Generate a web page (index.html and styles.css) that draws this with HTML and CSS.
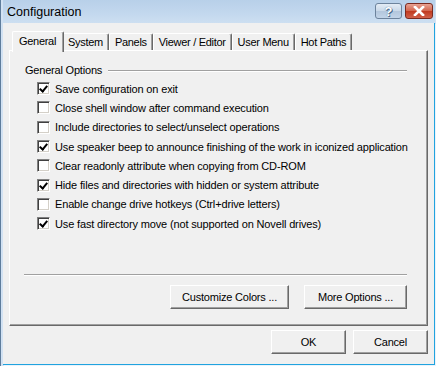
FILE: index.html
```html
<!DOCTYPE html>
<html lang="en">
<head>
  <meta charset="UTF-8">
  <title>Configuration</title>
  <link rel="stylesheet" href="styles.css">
</head>
<body>
  <div class="window">
    <div class="titlebar">
      <span class="title">Configuration</span>
      <div class="caption-btns">
        <span class="cap-btn help">?</span>
        <span class="cap-btn close">
          <svg width="14" height="10" viewBox="0 0 14 10">
            <path d="M3 1 L11 9 M11 1 L3 9" stroke="#fff" stroke-width="2.6" stroke-linecap="square"/>
          </svg>
        </span>
      </div>
    </div>
    <div class="client">
      <div class="tabs">
        <div class="tab active">General</div>
        <div class="tab">System</div>
        <div class="tab">Panels</div>
        <div class="tab">Viewer / Editor</div>
        <div class="tab">User Menu</div>
        <div class="tab">Hot Paths</div>
      </div>
      <div class="panel">
        <div class="group">
          <div class="group-head">
            <span>General Options</span>
            <div class="rule"></div>
          </div>
          <div class="options">
            <label class="opt"><span class="box checked"></span>Save configuration on exit</label>
            <label class="opt"><span class="box"></span>Close shell window after command execution</label>
            <label class="opt"><span class="box"></span>Include directories to select/unselect operations</label>
            <label class="opt"><span class="box checked"></span>Use speaker beep to announce finishing of the work in iconized application</label>
            <label class="opt"><span class="box"></span>Clear readonly attribute when copying from CD-ROM</label>
            <label class="opt"><span class="box checked"></span>Hide files and directories with hidden or system attribute</label>
            <label class="opt"><span class="box"></span>Enable change drive hotkeys (Ctrl+drive letters)</label>
            <label class="opt"><span class="box checked"></span>Use fast directory move (not supported on Novell drives)</label>
          </div>
        </div>
        <div class="panel-btns">
          <button class="btn wide">Customize Colors ...</button>
          <button class="btn more">More Options ...</button>
        </div>
      </div>
      <div class="dialog-btns">
        <button class="btn">OK</button>
        <button class="btn">Cancel</button>
      </div>
    </div>
  </div>
</body>
</html>
```

FILE: styles.css
```css
body {
  margin: 0;
  font-family: 'Liberation Sans', Arial, sans-serif;
  font-size: 11px;
  color: #000;
  background: #fff;
}
.window {
  width: 436px;
  height: 366px;
  box-sizing: border-box;
  display: flex;
  flex-direction: column;
  background: #d2e2f3;
  border-left: 1px solid #5f7d9c;
  padding: 0 1px 1px 2px;
}
.titlebar {
  height: 23px;
  flex: none;
  display: flex;
  align-items: center;
  justify-content: space-between;
  background: linear-gradient(180deg, #b8d0e9 0%, #c3d8ee 60%, #cddff1 100%);
}
.title {
  font-size: 12.5px;
  margin-left: 4px;
  padding-top: 1px;
  color: #000;
}
.caption-btns {
  display: flex;
  gap: 3px;
  margin-right: 2px;
  align-self: flex-start;
  margin-top: 3px;
}
.cap-btn {
  width: 27px;
  height: 16px;
  box-sizing: border-box;
  border: 1px solid #6d839c;
  border-radius: 3px;
  display: flex;
  align-items: center;
  justify-content: center;
}
.help {
  background: linear-gradient(180deg, #e4ecf5 0%, #c9d8e8 50%, #b3c6dc 51%, #c2d4e8 100%);
  color: #fff;
  font-weight: bold;
  font-size: 13px;
  text-shadow: 0 0 1px #3f5f82, 1px 1px 0 #4a6a8c;
}
.close {
  width: 28px;
  border-color: #7a2a20;
  background: linear-gradient(180deg, #e8a293 0%, #d2644c 50%, #c0391f 51%, #d0604a 100%);
}
.client {
  flex: 1;
  background: #f0f0f0;
  padding: 8px 6px 0 6px;
  border-right: 1px solid #20a3df;
  border-bottom: 1px solid #20a3df;
  box-shadow: 1px 1px 0 #eaf3fb;
}
.tabs {
  display: flex;
  align-items: flex-end;
  padding-left: 3px;
  height: 19px;
  position: relative;
  z-index: 1;
}
.tab {
  height: 17px;
  box-sizing: border-box;
  padding: 2px 5px 0 5px;
  border-top: 1px solid #fff;
  border-left: 1px solid #fff;
  border-right: 1px solid #696969;
  box-shadow: inset -1px 0 0 #a0a0a0;
  border-radius: 2px 2px 0 0;
  background: #f0f0f0;
  white-space: nowrap;
  letter-spacing: -0.3px;
}
.tab.active {
  height: 21px;
  margin-bottom: -2px;
  padding: 3px 7px 0 6px;
  margin-right: -2px;
  position: relative;
  z-index: 2;
}
.tab.active + .tab {
  border-left: none;
  padding-left: 6px;
}
.panel {
  height: 276px;
  box-sizing: border-box;
  border: 1px solid;
  border-color: #fff #696969 #696969 #fff;
  box-shadow: inset -1px -1px 0 #a0a0a0;
  padding: 12px 20px 0 14px;
  display: flex;
  flex-direction: column;
}
.group {
  height: 212px;
  box-sizing: border-box;
  border-bottom: 1px solid #a0a0a0;
  box-shadow: 0 1px 0 #fff;
}
.group-head {
  display: flex;
  align-items: center;
  gap: 6px;
  height: 14px;
  padding-left: 1px;
  letter-spacing: -0.2px;
}
.rule {
  flex: 1;
  border-top: 1px solid #a0a0a0;
  border-bottom: 1px solid #fff;
  margin-top: 1px;
}
.options {
  margin-top: 2px;
  padding-left: 13px;
}
.opt {
  display: flex;
  align-items: center;
  height: 19.3px;
  white-space: nowrap;
  letter-spacing: -0.15px;
}
.box {
  width: 13px;
  height: 13px;
  box-sizing: border-box;
  flex: none;
  margin-right: 5px;
  background: #fff;
  border: 1px solid;
  border-color: #808080 #fff #fff #808080;
  box-shadow: inset 1px 1px 0 #404040, inset -1px -1px 0 #d4d0c8;
  position: relative;
}
.box.checked::after {
  content: "";
  position: absolute;
  left: 3px;
  top: 1px;
  width: 3px;
  height: 6px;
  border: solid #000;
  border-width: 0 2px 2px 0;
  transform: rotate(40deg);
}
.panel-btns {
  display: flex;
  justify-content: flex-end;
  gap: 15px;
  margin-top: 10px;
}
.btn {
  height: 24px;
  width: 75px;
  box-sizing: border-box;
  font-family: inherit;
  font-size: 11px;
  letter-spacing: -0.2px;
  background: #f0f0f0;
  color: #000;
  border: 1px solid;
  border-color: #fff #696969 #696969 #fff;
  box-shadow: inset -1px -1px 0 #a0a0a0;
  padding: 0;
  margin: 0;
}
.btn.wide {
  width: 119px;
}
.btn.more {
  width: 103px;
}
.dialog-btns {
  display: flex;
  justify-content: flex-end;
  gap: 7px;
  margin-top: 4px;
  padding-right: 0;
}
```
